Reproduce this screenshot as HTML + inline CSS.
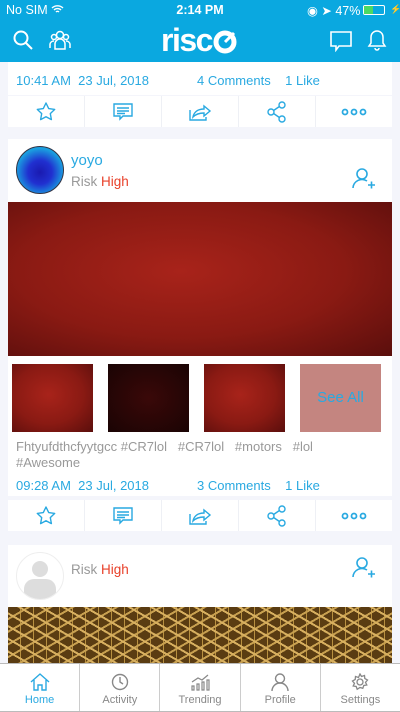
<!DOCTYPE html><html><head><style>
*{margin:0;padding:0;box-sizing:border-box}
body{width:400px;height:712px;overflow:hidden;background:#f4f5fb;font-family:"Liberation Sans",sans-serif;position:relative}
.a{position:absolute}
.hdr{left:0;top:0;width:400px;height:62px;background:#0aa8e0;color:#fff}
.card{left:8px;width:384px;background:#fff}
.blue{color:#29a9e1}
.act{left:8px;width:384px;height:31px;display:flex}
.act div{flex:1;border-right:1px solid #eef0f5;display:flex;align-items:center;justify-content:center;background:#fff}
.act div:last-child{border-right:none}
.tab{left:0;top:663px;width:400px;height:49px;background:#fff;border-top:1px solid #bbb;border-bottom:1px solid #bbb;display:flex}
.tab div{flex:1;border-right:1px solid #ccc;text-align:center;font-size:11px;color:#888;padding-top:9px}
.tab div:last-child{border-right:none}
.red{background:radial-gradient(ellipse at 45% 45%,#a8231a,#8a1a13 55%,#5a0e0c)}
.dt{font-size:13px}
</style></head><body>
<div class="a hdr">
 <div class="a" style="left:6px;top:3px;font-size:12.5px">No SIM</div>
 <svg class="a" style="left:51px;top:4px" width="13" height="10" viewBox="0 0 13 10"><path d="M1 4a8 8 0 0 1 11 0M3 6a5 5 0 0 1 7 0M5 8a2 2 0 0 1 3 0" stroke="#fff" stroke-width="1.4" fill="none"/></svg>
 <div class="a" style="left:0;width:400px;top:3px;text-align:center;font-size:12.5px;font-weight:bold">2:14 PM</div>
 <div class="a" style="left:307px;top:3px;font-size:12.5px">◉ ➤ 47%</div>
 <div class="a" style="left:363px;top:5px;width:22px;height:10px;border:1px solid #fff;border-radius:2px"><div style="width:9px;height:8px;background:#4cd964"></div></div>
 <div class="a" style="left:390px;top:4px;font-size:9px">⚡</div>
 <svg class="a" style="left:13px;top:30px" width="20" height="20" viewBox="0 0 20 20"><circle cx="8" cy="8" r="6.5" stroke="#fff" stroke-width="2" fill="none"/><path d="M13 13l6 6" stroke="#fff" stroke-width="2"/></svg>
 <svg class="a" style="left:49px;top:30px" width="22" height="20" viewBox="0 0 22 20"><g stroke="#fff" stroke-width="1.5" fill="none"><circle cx="11" cy="5" r="3.5"/><circle cx="5" cy="7" r="2.5"/><circle cx="17" cy="7" r="2.5"/><path d="M6 19v-5a5 5 0 0 1 10 0v5zM1 18v-4a4 4 0 0 1 4-3M21 18v-4a4 4 0 0 0-4-3"/></g></svg>
 <div class="a" style="left:161px;top:22px;font-size:32px;font-weight:bold;letter-spacing:-1.5px">risc</div>
 <svg class="a" style="left:213px;top:30px" width="26" height="24" viewBox="0 0 26 24"><circle cx="12" cy="12" r="9" stroke="#fff" stroke-width="5" fill="none"/><path d="M12 12l9-9" stroke="#fff" stroke-width="3"/></svg>
 <svg class="a" style="left:329px;top:30px" width="24" height="22" viewBox="0 0 24 22"><path d="M2 2h20v14H10l-3 4v-4H2z" stroke="#fff" stroke-width="1.6" fill="none"/></svg>
 <svg class="a" style="left:367px;top:29px" width="20" height="22" viewBox="0 0 20 22"><path d="M10 2a6 6 0 0 1 6 6v6l2 3H2l2-3V8a6 6 0 0 1 6-6zM8 19a2 2 0 0 0 4 0" stroke="#fff" stroke-width="1.5" fill="none"/></svg>
</div>
<div class="a card" style="top:62px;height:33px"></div>
<div class="a blue dt" style="left:16px;top:73px">10:41 AM&nbsp; 23 Jul, 2018</div>
<div class="a blue dt" style="left:197px;top:73px">4 Comments&nbsp;&nbsp;&nbsp; 1 Like</div>
<div class="a act" style="top:96px" id="act1"></div>

<div class="a card" style="top:139px;height:63px"></div>
<div class="a" style="left:16px;top:146px;width:48px;height:48px;border-radius:50%;border:1px solid #334;background:radial-gradient(circle at 50% 55%,#1a1ab0,#2030d0 35%,#1aa0e0 70%,#0a78b8)"></div>
<div class="a blue" style="left:71px;top:152px;font-size:15px">yoyo</div>
<div class="a" style="left:71px;top:174px;font-size:13.5px;color:#999">Risk <span style="color:#e8402a">High</span></div>
<svg class="a adduser" style="left:352px;top:167px" width="24" height="24" viewBox="0 0 24 24"><g stroke="#29a9e1" stroke-width="1.6" fill="none"><circle cx="10" cy="7" r="5"/><path d="M1 21a9 9 0 0 1 14-7M16 18h7M19.5 14.5v7"/></g></svg>
<div class="a red" style="left:8px;top:202px;width:384px;height:154px"></div>
<div class="a card" style="top:356px;height:140px"></div>
<div class="a red" style="left:12px;top:364px;width:81px;height:68px"></div>
<div class="a" style="left:108px;top:364px;width:81px;height:68px;background:radial-gradient(ellipse,#3a0808,#1a0404)"></div>
<div class="a red" style="left:204px;top:364px;width:81px;height:68px"></div>
<div class="a" style="left:300px;top:364px;width:81px;height:68px;background:#c48580;color:#29a9e1;font-size:15px;text-align:center;line-height:68px">See All</div>
<div class="a" style="left:16px;top:439px;font-size:13px;color:#999;line-height:16px">Fhtyufdthcfyytgcc #CR7lol&nbsp;&nbsp; #CR7lol&nbsp;&nbsp; #motors&nbsp;&nbsp; #lol<br>#Awesome</div>
<div class="a blue dt" style="left:16px;top:478px">09:28 AM&nbsp; 23 Jul, 2018</div>
<div class="a blue dt" style="left:197px;top:478px">3 Comments&nbsp;&nbsp;&nbsp; 1 Like</div>
<div class="a act" style="top:500px" id="act2"></div>

<div class="a card" style="top:545px;height:118px"></div>
<div class="a" style="left:16px;top:552px;width:48px;height:48px;border-radius:50%;border:1px solid #eee;overflow:hidden;background:#fff"><div class="a" style="left:15px;top:8px;width:16px;height:16px;border-radius:50%;background:#ddd"></div><div class="a" style="left:7px;top:26px;width:32px;height:20px;border-radius:10px 10px 4px 4px;background:#ddd"></div></div>
<div class="a" style="left:71px;top:562px;font-size:13.5px;color:#999">Risk <span style="color:#e8402a">High</span></div>
<svg class="a" style="left:352px;top:556px" width="24" height="24" viewBox="0 0 24 24"><g stroke="#29a9e1" stroke-width="1.6" fill="none"><circle cx="10" cy="7" r="5"/><path d="M1 21a9 9 0 0 1 14-7M16 18h7M19.5 14.5v7"/></g></svg>
<div class="a" style="left:8px;top:607px;width:384px;height:56px;background:repeating-linear-gradient(30deg,transparent 0 9px,#d8b060 9px 11px),repeating-linear-gradient(-30deg,transparent 0 9px,#c8a050 9px 11px),repeating-linear-gradient(90deg,transparent 0 12px,#b89040 12px 13px),#5a3c12"></div>

<div class="a tab">
 <div style="color:#29a9e1"><svg width="20" height="18" viewBox="0 0 20 18"><path d="M1 9L10 1l9 8M4 7v10h4v-5h4v5h4V7" stroke="#29a9e1" stroke-width="1.4" fill="none"/></svg><br>Home</div>
 <div><svg width="18" height="18" viewBox="0 0 18 18"><circle cx="9" cy="9" r="7.5" stroke="#888" stroke-width="1.4" fill="none"/><path d="M9 4v5l3 2" stroke="#888" stroke-width="1.4" fill="none"/></svg><br>Activity</div>
 <div><svg width="20" height="18" viewBox="0 0 20 18"><g stroke="#888" stroke-width="1.2" fill="none"><path d="M2 17v-4h2v4zM7 17v-6h2v6zM12 17v-8h2v8zM17 17v-10h2v10zM2 9l6-4 4 2 6-5"/></g></svg><br>Trending</div>
 <div><svg width="18" height="18" viewBox="0 0 18 18"><g stroke="#888" stroke-width="1.4" fill="none"><circle cx="9" cy="5.5" r="4.5"/><path d="M1 18a8 8 0 0 1 16 0"/></g></svg><br>Profile</div>
 <div><svg width="18" height="18" viewBox="0 0 18 18"><g stroke="#888" stroke-width="1.3" fill="none"><circle cx="9" cy="9" r="3"/><path d="M9 1l1.5 2.5 3-1 .3 3 2.7 1.5-2 2.3 1.3 2.7-3 .5-1 2.8L9 14.5 6.2 16.3l-1-2.8-3-.5 1.3-2.7-2-2.3 2.7-1.5.3-3 3 1z"/></g></svg><br>Settings</div>
</div>
<script>
var h='<div><svg width="22" height="22" viewBox="0 0 22 22"><path d="M11 2l2.7 5.6 6 .8-4.4 4.2 1.1 6L11 15.7 5.6 18.6l1.1-6L2.3 8.4l6-.8z" stroke="#29a9e1" stroke-width="1.4" fill="none" stroke-linejoin="round"/></svg></div>'+
'<div><svg width="22" height="22" viewBox="0 0 22 22"><g stroke="#29a9e1" stroke-width="1.4" fill="none"><path d="M2 3h18v12H11l-3 3v-3H2z"/><path d="M5 7h12M5 10h12M5 12.5h8"/></g></svg></div>'+
'<div><svg width="24" height="22" viewBox="0 0 24 22"><g stroke="#29a9e1" stroke-width="1.4" fill="none"><path d="M2 9v10h16v-3"/><path d="M5 16c1-5 5-8 11-8V5l6 5-6 5v-3c-5 0-8 1-11 4z"/></g></svg></div>'+
'<div><svg width="22" height="22" viewBox="0 0 22 22"><g stroke="#29a9e1" stroke-width="1.4" fill="none"><circle cx="16" cy="4" r="3"/><circle cx="5" cy="11" r="3"/><circle cx="16" cy="18" r="3"/><path d="M7.6 9.5l5.8-4M7.6 12.5l5.8 4"/></g></svg></div>'+
'<div><svg width="26" height="8" viewBox="0 0 26 8"><g stroke="#29a9e1" stroke-width="1.8" fill="none"><circle cx="4" cy="4" r="2.5"/><circle cx="13" cy="4" r="2.5"/><circle cx="22" cy="4" r="2.5"/></g></svg></div>';
document.getElementById('act1').innerHTML=h;document.getElementById('act2').innerHTML=h;
</script>
</body></html>
